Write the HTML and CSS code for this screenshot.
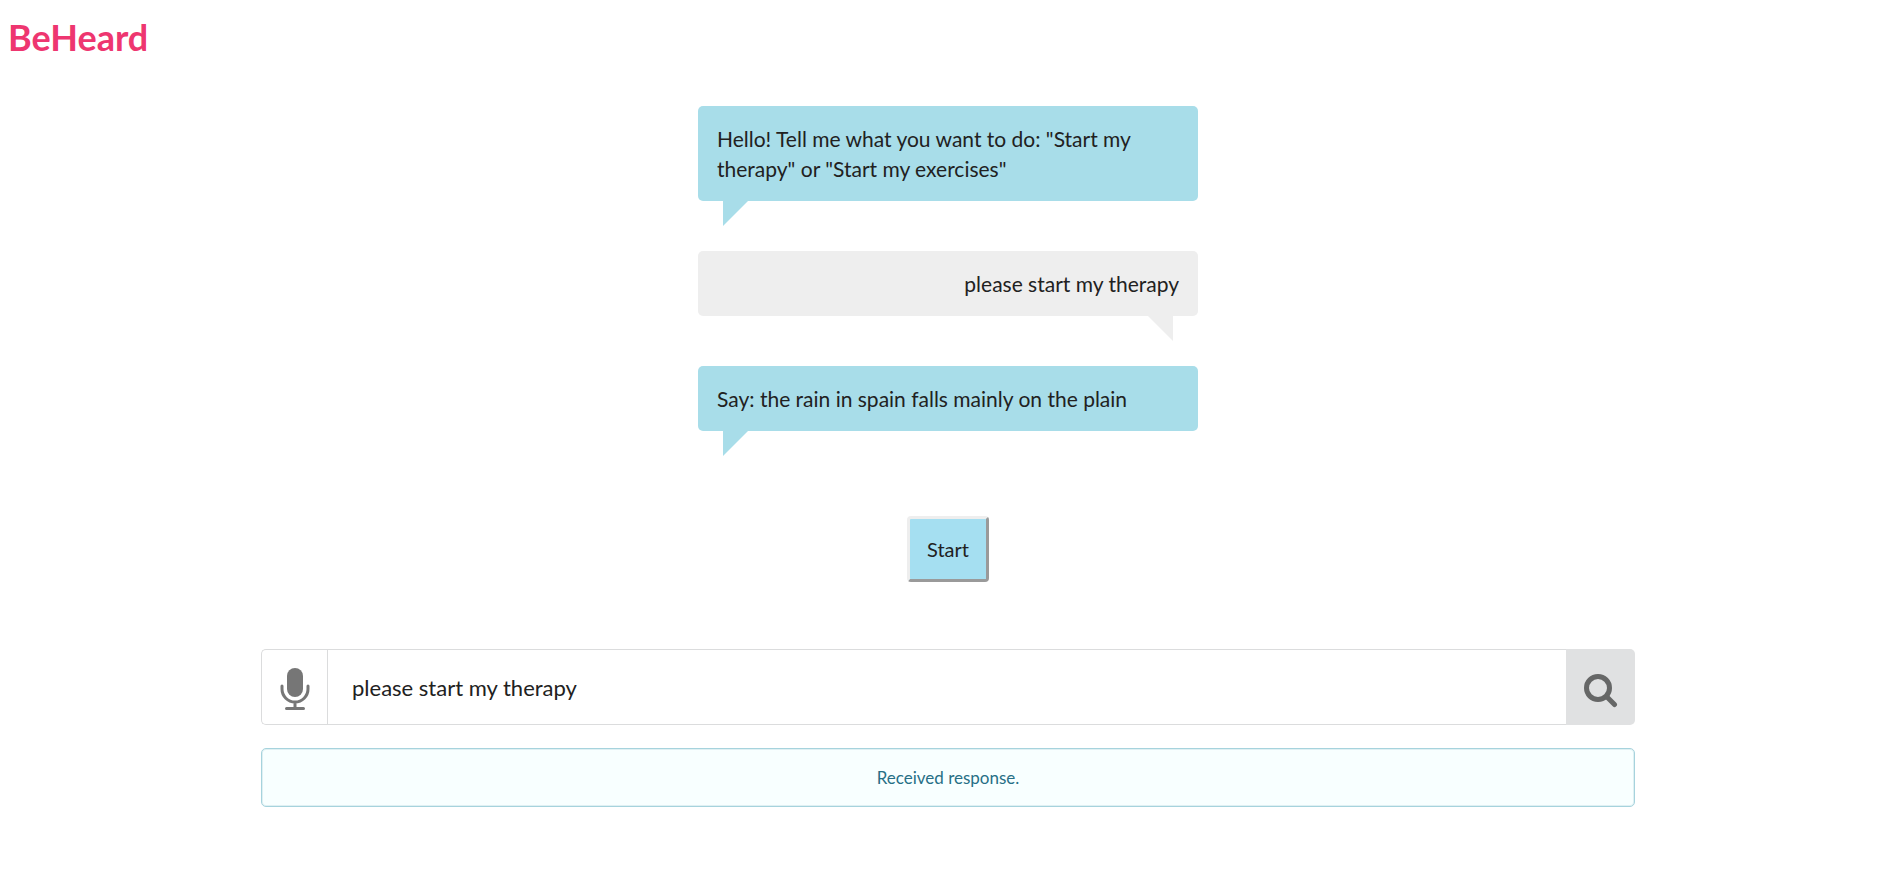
FILE: index.html
```html
<!DOCTYPE html>
<html lang="en">
<head>
<meta charset="utf-8">
<title>BeHeard</title>
<link rel="stylesheet" href="styles.css">
</head>
<body>
<h1 class="brand">BeHeard</h1>
<main class="main">
  <section class="chat" aria-label="Conversation">
    <p class="bubble bubble-bot">Hello! Tell me what you want to do: "Start my therapy" or "Start my exercises"</p>
    <p class="bubble bubble-user">please start my therapy</p>
    <p class="bubble bubble-bot">Say: the rain in spain falls mainly on the plain</p>
  </section>
  <button class="start" type="button">Start</button>
  <form class="search">
    <button class="mic" type="button" aria-label="Speak">
      <svg width="30" height="42" viewBox="0 0 30 42" aria-hidden="true">
        <rect x="7" y="0" width="16" height="29" rx="8" fill="#767676"/>
        <path d="M2 18v3a13 13 0 0 0 26 0v-3M15 34v6M6.500 40.500h17" fill="none" stroke="#767676" stroke-width="3" stroke-linecap="round"/>
      </svg>
    </button>
    <input class="query" type="text" value="please start my therapy" aria-label="Your message">
    <button class="go" type="submit" aria-label="Search">
      <svg width="34" height="34" viewBox="0 0 34 34" aria-hidden="true">
        <circle cx="14" cy="14" r="11.500" fill="none" stroke="#666767" stroke-width="5"/>
        <path d="M23 23l7.500 7.500" stroke="#666767" stroke-width="5" stroke-linecap="round"/>
      </svg>
    </button>
  </form>
  <p class="status" role="status">Received response.</p>
</main>
</body>
</html>
```
FILE: styles.css
```css
* {
  box-sizing: border-box;
}

body {
  margin: 0;
  padding: 0 4px 0 8px;
  background: #fff;
  color: #212121;
  font-family: Lato, "Open Sans", sans-serif;
}

.brand {
  margin: 15px 0 47px;
  color: #ee3670;
  font-size: 36px;
  line-height: 44px;
  font-weight: 700;
}

.main {
  display: flex;
  flex-direction: column;
  align-items: center;
}

.chat {
  display: flex;
  flex-direction: column;
  gap: 50px;
  width: 100%;
  max-width: 500px;
}

.bubble {
  position: relative;
  margin: 0;
  padding: 18px 19px 17px;
  border-radius: 5px;
  font-size: 21px;
  line-height: 30px;
}

.bubble::after {
  content: "";
  position: absolute;
  top: 100%;
  width: 25px;
  height: 25px;
}

.bubble-bot {
  background: #a8dde9;
}

.bubble-bot::after {
  left: 25px;
  background: #a8dde9;
  clip-path: polygon(0 0, 100% 0, 0 100%);
}

.bubble-user {
  background: #eee;
  text-align: right;
}

.bubble-user::after {
  right: 25px;
  background: #eee;
  clip-path: polygon(0 0, 100% 0, 100% 100%);
}

.start {
  margin: 85px 0 66px;
  padding: 18px 17px;
  border: 3px solid;
  border-color: #eee #9a9a9a #9a9a9a #eee;
  border-radius: 4px;
  background: #a5dff1;
  color: #212121;
  font: inherit;
  font-size: 20px;
  line-height: 24px;
}

.search {
  display: flex;
  width: 100%;
  max-width: 1374px;
  height: 76px;
  margin-top: 1px;
}

.mic,
.go {
  display: flex;
  align-items: center;
  justify-content: center;
  padding: 4px 0 0;
  border: 0;
}

.mic {
  width: 66px;
  border: 1px solid #dbdcdd;
  border-right: 0;
  border-radius: 5px 0 0 5px;
  background: #fff;
}

.query {
  flex: 1;
  min-width: 0;
  padding: 0 24px;
  border: 1px solid #dbdcdd;
  border-right: 0;
  border-radius: 0;
  background: #fff;
  color: #212121;
  font: inherit;
  font-size: 22px;
}

.go {
  width: 69px;
  padding-top: 7px;
  border-radius: 0 5px 5px 0;
  background: #e0e1e2;
}

.status {
  width: 100%;
  max-width: 1374px;
  margin: 23px 0 0;
  padding: 16px;
  border: 1px solid #a6d3dd;
  border-radius: 5px;
  box-shadow: inset 0 0 0 1px #dff0f3;
  background: #f8ffff;
  color: #276f86;
  font-size: 17px;
  line-height: 25px;
  text-align: center;
}
```
